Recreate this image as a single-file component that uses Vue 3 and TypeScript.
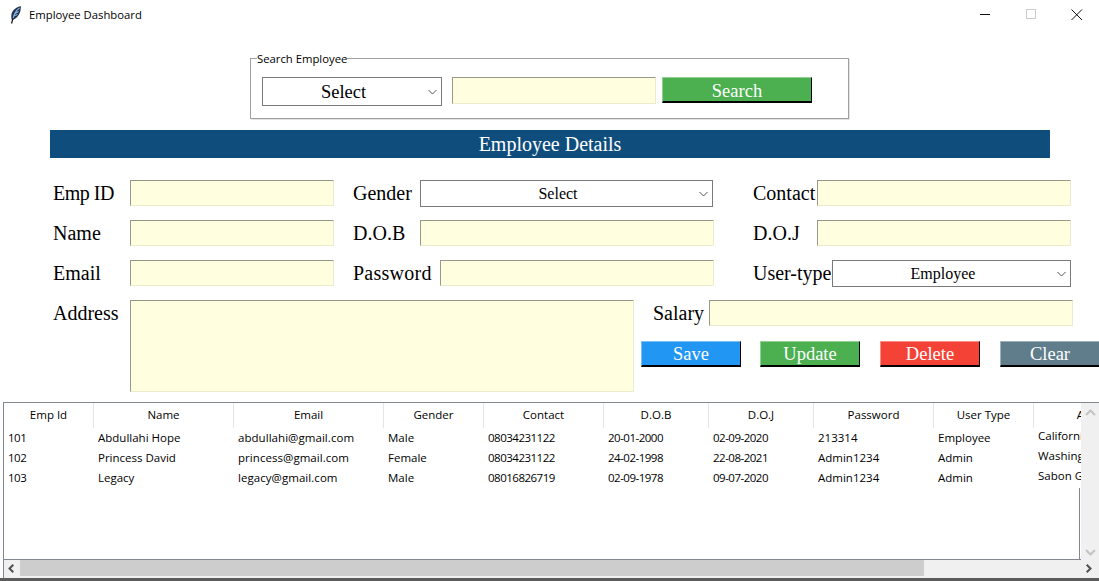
<script setup lang="ts">
interface Row { id: string; name: string; email: string; gender: string; contact: string; dob: string; doj: string; password: string; type: string; address: string }
const columns = [
  { label: 'Emp Id', width: 90 }, { label: 'Name', width: 140 }, { label: 'Email', width: 150 },
  { label: 'Gender', width: 100 }, { label: 'Contact', width: 120 }, { label: 'D.O.B', width: 105 },
  { label: 'D.O.J', width: 105 }, { label: 'Password', width: 120 }, { label: 'User Type', width: 100 },
  { label: 'Address', width: 130 },
]
const numeric = [0, 4, 5, 6]
const rows: Row[] = [
  { id: '101', name: 'Abdullahi Hope', email: 'abdullahi@gmail.com', gender: 'Male', contact: '08034231122', dob: '20-01-2000', doj: '02-09-2020', password: '213314', type: 'Employee', address: 'California' },
  { id: '102', name: 'Princess David', email: 'princess@gmail.com', gender: 'Female', contact: '08034231122', dob: '24-02-1998', doj: '22-08-2021', password: 'Admin1234', type: 'Admin', address: 'Washington' },
  { id: '103', name: 'Legacy', email: 'legacy@gmail.com', gender: 'Male', contact: '08016826719', dob: '02-09-1978', doj: '09-07-2020', password: 'Admin1234', type: 'Admin', address: 'Sabon Gari' },
]
const cells = (r: Row) => [r.id, r.name, r.email, r.gender, r.contact, r.dob, r.doj, r.password, r.type]
</script>

<template>
  <div class="window">
    <header class="titlebar">
      <svg class="feather" width="12" height="18" viewBox="0 0 12 18">
        <path d="M11 .3C7 .8 2.600 3.600 1.500 8.300c-.5 2.200-.2 4.200.4 5.700 3.800-1 7-3.900 8.200-8 .6-2 .7-4 .9-5.700z" fill="#1f3350" />
        <path d="M9.500 2C6.500 4.200 4.300 7.500 3.200 12M8.600 5.500L5.200 7.500M7.400 8.500L4.300 9.800" stroke="#8fb2dc" stroke-width="1.100" fill="none" />
        <path d="M3 12.500L1.500 17.500" stroke="#111" stroke-width="1.200" fill="none" />
      </svg>
      <span class="title">Employee Dashboard</span>
      <div class="controls">
        <svg width="46" height="30" viewBox="0 0 46 30"><path d="M18 14.500h10" stroke="#111" fill="none" /></svg>
        <svg width="46" height="30" viewBox="0 0 46 30"><rect x="18.500" y="9.500" width="9" height="9" stroke="#ccc" fill="none" /></svg>
        <svg width="46" height="30" viewBox="0 0 46 30"><path d="M17.500 9.500l10.500 10.500M28 9.500L17.500 20" stroke="#111" fill="none" /></svg>
      </div>
    </header>

    <fieldset class="search">
      <legend>Search Employee</legend>
      <div class="combo combo-search">
        <span>Select</span>
        <svg class="chev" width="9" height="6" viewBox="0 0 9 6"><path d="M.5 1l4 4 4-4" stroke="#555" fill="none" /></svg>
      </div>
      <input class="entry search-entry" />
      <button class="btn btn-search green">Search</button>
    </fieldset>

    <h1 class="banner">Employee Details</h1>

    <section class="form">
      <div class="row">
        <label class="lbl l1 tight">Emp ID</label><input class="entry e1" />
        <label class="lbl l2">Gender</label>
        <div class="combo combo-gender"><span>Select</span><svg class="chev" width="9" height="6" viewBox="0 0 9 6"><path d="M.5 1l4 4 4-4" stroke="#555" fill="none" /></svg></div>
        <label class="lbl l3">Contact</label><input class="entry e3" />
      </div>
      <div class="row">
        <label class="lbl l1">Name</label><input class="entry e1" />
        <label class="lbl l2">D.O.B</label><input class="entry e2" />
        <label class="lbl l3">D.O.J</label><input class="entry e3" />
      </div>
      <div class="row">
        <label class="lbl l1">Email</label><input class="entry e1" />
        <label class="lbl l2b">Password</label><input class="entry e2b" />
        <label class="lbl l3c">User-type</label>
        <div class="combo combo-type"><span>Employee</span><svg class="chev" width="9" height="6" viewBox="0 0 9 6"><path d="M.5 1l4 4 4-4" stroke="#555" fill="none" /></svg></div>
      </div>
      <div class="row last">
        <label class="lbl l1">Address</label>
        <textarea class="entry addr"></textarea>
        <div class="side">
          <div class="salary">
            <label class="lbl sal-lbl">Salary</label><input class="entry sal" />
          </div>
          <div class="actions">
            <button class="btn blue">Save</button>
            <button class="btn green">Update</button>
            <button class="btn red">Delete</button>
            <button class="btn slate">Clear</button>
          </div>
        </div>
      </div>
    </section>

    <section class="table">
      <div class="table-top">
        <div class="viewport">
          <div class="thead">
            <div v-for="c in columns" :key="c.label" class="th" :style="{ width: c.width + 'px' }">{{ c.label }}</div>
          </div>
          <div v-for="r in rows" :key="r.id" class="tr">
            <div
              v-for="(v, i) in cells(r)"
              :key="i"
              class="td"
              :class="{ num: numeric.includes(i), mail: i === 2 }"
              :style="{ width: columns[i].width + 'px' }"
            >{{ v }}</div>
            <div class="td td-addr">{{ r.address }}</div>
          </div>
        </div>
        <div class="vbar">
          <svg width="11" height="7" viewBox="0 0 11 7"><path d="M1 6l4.500-4.500L10 6" stroke="#c4c4c4" stroke-width="2" fill="none" /></svg>
          <svg width="11" height="7" viewBox="0 0 11 7"><path d="M1 1l4.500 4.500L10 1" stroke="#c4c4c4" stroke-width="2" fill="none" /></svg>
        </div>
      </div>
      <div class="hbar">
        <svg class="arrow arrow-l" width="6" height="9" viewBox="0 0 6 9"><path d="M5.300 .7L1.500 4.500l3.800 3.800" stroke="#505050" stroke-width="2" fill="none" /></svg>
        <div class="thumb"></div>
        <svg class="arrow arrow-r" width="6" height="9" viewBox="0 0 6 9"><path d="M.7 .7l3.800 3.800L.7 8.300" stroke="#505050" stroke-width="2" fill="none" /></svg>
      </div>
    </section>
    <div class="edge"></div>
  </div>
</template>

<style>
html, body { margin: 0; background: #fff; overflow: hidden; }
</style>

<style scoped>
.window {
  width: 1099px;
  height: 581px;
  overflow: hidden;
  background: #fff;
  display: flex;
  flex-direction: column;
  font-family: "Liberation Serif", serif;
  color: #000;
}
.titlebar {
  flex: none;
  height: 30px;
  display: flex;
  align-items: center;
  padding-left: 10px;
  font-family: "Open Sans", sans-serif;
}
.feather { margin-right: 7px; }
.title { font-size: 11.300px; color: #000; position: relative; top: -1px; }
.controls { margin-left: auto; margin-right: -1px; display: flex; }
.controls svg { display: block; }

.search {
  box-sizing: border-box;
  flex: none;
  width: 599px;
  height: 61px;
  margin: 28px 0 0 250px;
  padding: 18px 0 0 11px;
  border: 1px solid #a0a0a0;
  box-shadow: 1px 1px 0 #e3e3e3;
  display: flex;
  align-items: flex-start;
  position: relative;
}
.search legend {
  position: absolute;
  left: 6px;
  top: -7px;
  padding: 0;
  background: #fff;
  font: 11.300px/14px "Open Sans", sans-serif;
}
.combo {
  box-sizing: border-box;
  flex: none;
  position: relative;
  display: flex;
  align-items: center;
  justify-content: center;
  border: 1px solid #7a7a7a;
  background: #fff;
}
.chev { position: absolute; right: 4px; top: 50%; margin-top: -3px; }
.combo-search { width: 180px; height: 29px; font-size: 18.500px; padding: 2px 17px 0 0; }
.entry {
  box-sizing: border-box;
  display: block;
  flex: none;
  margin: 0;
  padding: 0;
  background: #ffffe0;
  outline: none;
  border: 1px solid #ebebd0;
  border-top-color: #97978a;
  border-left-color: #97978a;
  border-radius: 0;
  resize: none;
}
.search-entry { width: 204px; height: 27px; margin-left: 10px; }
.btn {
  box-sizing: border-box;
  width: 100px;
  height: 26px;
  padding: 0;
  color: #fff;
  font: 18.500px/22px "Liberation Serif", serif;
  border: 1px solid;
  border-right: 1px solid #000;
  border-bottom: 2px solid #000;
  border-radius: 0;
  flex: none;
}
.btn-search { width: 150px; margin-left: 6px; padding-top: 2px; }
.green { background: #4caf50; border-top-color: #94cf96; border-left-color: #94cf96; }
.blue { background: #2196f3; border-top-color: #7ac0f8; border-left-color: #7ac0f8; }
.red { background: #f44336; border-top-color: #f88e86; border-left-color: #f88e86; }
.slate { background: #607d8b; border-top-color: #a0b1b9; border-left-color: #a0b1b9; }

.banner {
  flex: none;
  width: 1000px;
  height: 28px;
  margin: 11px 0 0 50px;
  background: #0f4d7d;
  color: #fff;
  font-size: 20px;
  font-weight: 400;
  line-height: 28px;
  text-align: center;
}

.form { flex: none; margin-top: 22px; display: flex; flex-direction: column; gap: 14px; }
.row { display: flex; height: 26px; align-items: flex-start; }
.row.last { height: 92px; }
.lbl { font-size: 20px; line-height: 27px; white-space: nowrap; flex: none; }
.tight { letter-spacing: -.5px; }
.l1 { width: 77px; margin-left: 53px; }
.e1 { width: 204px; height: 26px; }
.l2 { width: 67px; margin-left: 19px; }
.e2 { width: 294px; height: 26px; }
.combo-gender { width: 293px; height: 27px; margin-right: 1px; font-size: 16px; padding-right: 17px; }
.l3 { width: 64px; margin-left: 39px; }
.e3 { width: 254px; height: 26px; }
.l2b { width: 87px; margin-left: 19px; letter-spacing: .25px; }
.e2b { width: 274px; height: 26px; }
.l3c { width: 79px; margin-left: 39px; }
.combo-type { width: 239px; height: 27px; font-size: 16px; padding-right: 17px; }
.addr { width: 504px; height: 92px; }
.side { margin-left: 7px; flex: none; }
.salary { display: flex; margin-left: 12px; }
.sal-lbl { width: 56px; }
.sal { width: 364px; height: 26px; }
.actions { display: flex; gap: 20px; margin-top: 14px; }
.actions .btn:first-child { margin-right: -1px; }

.table {
  box-sizing: border-box;
  flex: none;
  margin: 10px 0 0 3px;
  height: 176px;
  border-top: 1px solid #828790;
  border-left: 1px solid #828790;
  display: flex;
  flex-direction: column;
  font-family: "Open Sans", sans-serif;
  font-size: 11.500px;
}
.table-top { flex: none; height: 157px; display: flex; }
.viewport {
  box-sizing: border-box;
  width: 1077px;
  height: 157px;
  overflow: hidden;
  border-bottom: 1px solid #828790;
}
.thead { display: flex; height: 25px; }
.th {
  box-sizing: border-box;
  flex: none;
  text-align: center;
  line-height: 24px;
  border-right: 1px solid #e5e5e5;
  white-space: nowrap;
}
.tr { display: flex; height: 20px; line-height: 20px; white-space: nowrap; }
.td { box-sizing: border-box; flex: none; padding-left: 4px; overflow: hidden; }
.num { letter-spacing: -.5px; }
.mail { letter-spacing: .05px; }
.td-addr { width: 100px; position: relative; top: -2px; }
.vbar {
  box-sizing: border-box;
  position: relative;
  flex: none;
  width: 18px;
  background: #f0f0f0;
  display: flex;
  flex-direction: column;
  align-items: center;
  justify-content: space-between;
  padding: 6px 0 4px;
}
.vbar::before {
  content: "";
  position: absolute;
  left: -2px;
  top: 85px;
  bottom: 0;
  width: 1px;
  background: #828790;
}
.hbar { flex: none; height: 18px; display: flex; align-items: flex-start; background: #f0f0f0; }
.arrow { flex: none; margin-top: 4px; }
.arrow-l { margin-left: 4px; margin-right: 6px; }
.arrow-r { margin-left: auto; margin-right: 7px; }
.thumb { flex: none; width: 904px; height: 16px; background: #cdcdcd; }
.edge { flex: none; height: 3px; background: #5c5c5c; }
</style>
